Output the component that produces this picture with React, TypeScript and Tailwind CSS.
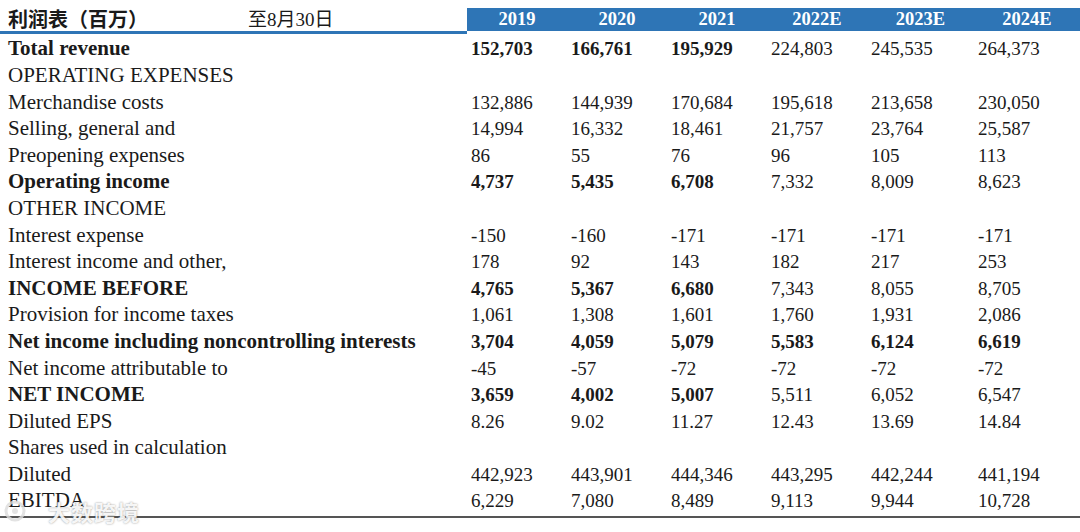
import React from "react";

type Row = {
  label: string;
  bold?: boolean;
  values?: string[];
  boldCount?: number;
};

const years = ["2019", "2020", "2021", "2022E", "2023E", "2024E"];

const rows: Row[] = [
  { label: "Total revenue", bold: true, boldCount: 3, values: ["152,703", "166,761", "195,929", "224,803", "245,535", "264,373"] },
  { label: "OPERATING EXPENSES" },
  { label: "Merchandise costs", values: ["132,886", "144,939", "170,684", "195,618", "213,658", "230,050"] },
  { label: "Selling, general and", values: ["14,994", "16,332", "18,461", "21,757", "23,764", "25,587"] },
  { label: "Preopening expenses", values: ["86", "55", "76", "96", "105", "113"] },
  { label: "Operating income", bold: true, boldCount: 3, values: ["4,737", "5,435", "6,708", "7,332", "8,009", "8,623"] },
  { label: "OTHER INCOME" },
  { label: "Interest expense", values: ["-150", "-160", "-171", "-171", "-171", "-171"] },
  { label: "Interest income and other,", values: ["178", "92", "143", "182", "217", "253"] },
  { label: "INCOME BEFORE", bold: true, boldCount: 3, values: ["4,765", "5,367", "6,680", "7,343", "8,055", "8,705"] },
  { label: "Provision for income taxes", values: ["1,061", "1,308", "1,601", "1,760", "1,931", "2,086"] },
  { label: "Net income including noncontrolling interests", bold: true, boldCount: 6, values: ["3,704", "4,059", "5,079", "5,583", "6,124", "6,619"] },
  { label: "Net income attributable to", values: ["-45", "-57", "-72", "-72", "-72", "-72"] },
  { label: "NET INCOME", bold: true, boldCount: 3, values: ["3,659", "4,002", "5,007", "5,511", "6,052", "6,547"] },
  { label: "Diluted EPS", values: ["8.26", "9.02", "11.27", "12.43", "13.69", "14.84"] },
  { label: "Shares used in calculation" },
  { label: "Diluted", values: ["442,923", "443,901", "444,346", "443,295", "442,244", "441,194"] },
  { label: "EBITDA", values: ["6,229", "7,080", "8,489", "9,113", "9,944", "10,728"] },
];

const cols = "grid grid-cols-[467px_100px_100px_100px_100px_107px_1fr]";

export default function App() {
  return (
    <div
      className="relative w-[1080px] h-[532px] overflow-hidden bg-white text-[19px] text-[#1a1a1a] leading-none"
      style={{ fontFamily: '"Liberation Serif", "Noto Sans CJK SC", serif' }}
    >
      <div className="pt-2">
        {/* header */}
        <div className={`${cols} h-[26px] items-center`}>
          <div className="flex items-center pl-2">
            <span className="font-bold w-[240px] text-[20px]">利润表（百万）</span>
            <span>至8月30日</span>
          </div>
          {years.map((y) => (
            <div
              key={y}
              className="h-full flex items-center justify-center bg-[#2e75b6] text-white font-bold text-[18.5px]"
            >
              {y}
            </div>
          ))}
          <div className="h-full bg-[#2e75b6]" />
        </div>

        {/* body */}
        <div className="pt-[3px] border-b-2 border-[#555]">
          {rows.map((r) => (
            <div key={r.label} className={`${cols} h-[26.6px] items-center`}>
              <div className={`pl-2 whitespace-nowrap text-[21px] ${r.bold ? "font-bold" : ""}`}>
                {r.label}
              </div>
              {years.map((y, i) => (
                <div
                  key={y}
                  className={`pl-1 ${r.boldCount && i < r.boldCount ? "font-bold" : ""}`}
                >
                  {r.values ? r.values[i] : ""}
                </div>
              ))}
              <div />
            </div>
          ))}
        </div>
      </div>

      {/* watermark */}
      <div className="absolute left-[4px] top-[500px] flex items-center gap-[22px] text-white/90 [text-shadow:0_0_2px_rgba(0,0,0,0.45)]">
        <svg width="22" height="22" viewBox="0 0 22 22" className="opacity-80">
          <circle cx="11" cy="11" r="9" fill="none" stroke="#ddd" strokeWidth="3" />
          <circle cx="11" cy="11" r="3" fill="#ddd" />
        </svg>
        <span
          className="text-[22px] font-bold tracking-[1px]"
          style={{ fontFamily: '"Noto Sans CJK SC", sans-serif' }}
        >
          大数跨境
        </span>
      </div>
    </div>
  );
}
